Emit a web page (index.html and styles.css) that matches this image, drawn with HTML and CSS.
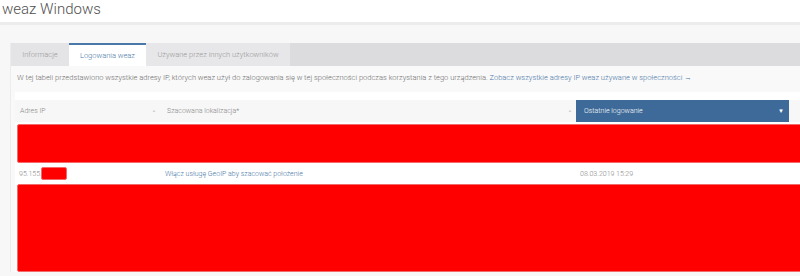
FILE: index.html
```html
<!DOCTYPE html>
<html>
<head>
    <title>weaz Windows</title>
    <link rel="stylesheet" href="styles.css">
</head>
<body>
    <h1 class="page-title">weaz Windows</h1>

    <div class="page-body">
        <div class="panel">
            <div class="tabs">
                <div class="tab first">Informacje</div>
                <div class="tab active">Logowania weaz</div>
                <div class="tab light">Używane przez innych użytkowników</div>
            </div>

            <p class="intro">
                W tej tabeli przedstawiono wszystkie adresy IP, których weaz użył do zalogowania się w tej społeczności podczas korzystania z tego urządzenia.
                <a href="#">Zobacz wszystkie adresy IP weaz używane w społeczności &rarr;</a>
            </p>

            <div class="ip-table">
                <div class="table-head">
                    <div class="col col-ip">Adres IP <span class="sort">&#9650;</span></div>
                    <div class="col col-loc">Szacowana lokalizacja* <span class="sort">&#9650;</span></div>
                    <div class="col col-date active">Ostatnie logowanie <span class="caret">&#9660;</span></div>
                </div>

                <!-- hidden rows -->
                <div class="redacted tall"></div>

                <div class="table-row">
                    <div class="col col-ip">95.155.<span class="redacted-inline"></span></div>
                    <div class="col col-loc"><a href="#">Włącz usługę GeoIP aby szacować położenie</a></div>
                    <div class="col col-date">08.03.2019 15:29</div>
                </div>

                <div class="redacted taller"></div>
            </div>
        </div>
    </div>
</body>
</html>
```

FILE: styles.css
```css
html, body {
    margin: 0;
    padding: 0;
    overflow: hidden;
}

body {
    background-color: #f7f7f7;
    font-family: Roboto, "Liberation Sans", sans-serif;
    font-weight: 300;
    color: #777;
    width: 800px;
    height: 276px;
}

a {
    color: #4a78a8;
    text-decoration: none;
}

.page-title {
    margin: 0;
    padding: 0 0 0 2px;
    height: 22px;
    line-height: 19px;
    font-size: 15px;
    font-weight: 300;
    color: #505050;
    background-color: white;
    border-bottom: 3px solid #ececec;
}

.page-body {
    padding: 18px 0 0 10px;
}

.panel {
    width: 820px;
    background-color: #f9f9f9;
    border-left: 1px solid #ececec;
}

.tabs {
    display: flex;
    height: 23px;
    background-color: #dcdcdf;
}

.tab {
    line-height: 23px;
    font-size: 7.5px;
    color: #999;
    text-align: center;
    white-space: nowrap;
    background-color: #e4e4e6;
    box-sizing: border-box;
}

.tab.first {
    width: 58px;
}

.tab.active {
    width: 77px;
    background-color: white;
    color: #4a78a8;
    border-top: 2px solid #4a78a8;
    line-height: 21px;
}

.tab.light {
    width: 144px;
    background-color: #e7e7e9;
}

.intro {
    margin: 0;
    height: 26px;
    padding-left: 6px;
    line-height: 23px;
    font-size: 7.5px;
    color: #6f6f6f;
    white-space: nowrap;
}

.ip-table {
    margin-left: 4px;
    padding-top: 8px;
    background-color: white;
    font-size: 7px;
}

.table-head {
    display: grid;
    grid-template-columns: 145px 416px 213px;
    height: 22px;
    background-color: #f7f7f7;
}

.table-row {
    display: grid;
    grid-template-columns: 145px 416px 213px;
    height: 21px;
    align-items: center;
}

.col {
    position: relative;
    padding-left: 5px;
    line-height: 22px;
    color: #888;
    white-space: nowrap;
}

.table-head .col-loc {
    padding-left: 7px;
}

.table-row .col-ip {
    padding-left: 4px;
}

.table-row .col-loc {
    padding-left: 5px;
}

.table-row .col-date {
    padding-left: 4px;
}

.sort {
    position: absolute;
    right: 4px;
    top: 0;
    font-size: 4px;
    color: #ccc;
}

.col-date.active {
    background-color: #3d6a99;
    color: white;
    padding-left: 8px;
}

.caret {
    position: absolute;
    right: 5px;
    top: 0;
    font-size: 6px;
    color: white;
}

.redacted {
    margin-left: 2px;
    margin-top: 2px;
    background-color: #ff0000;
    border: 1px solid #f46a6a;
    border-radius: 2px;
}

.redacted.tall {
    height: 37px;
}

.redacted.taller {
    height: 86px;
    margin-top: 0;
}

.redacted-inline {
    display: inline-block;
    vertical-align: middle;
    width: 24px;
    height: 11px;
    margin-top: -2px;
    margin-left: -1px;
    background-color: #ff0000;
    border: 1px solid #f46a6a;
    border-radius: 2px;
}
```
